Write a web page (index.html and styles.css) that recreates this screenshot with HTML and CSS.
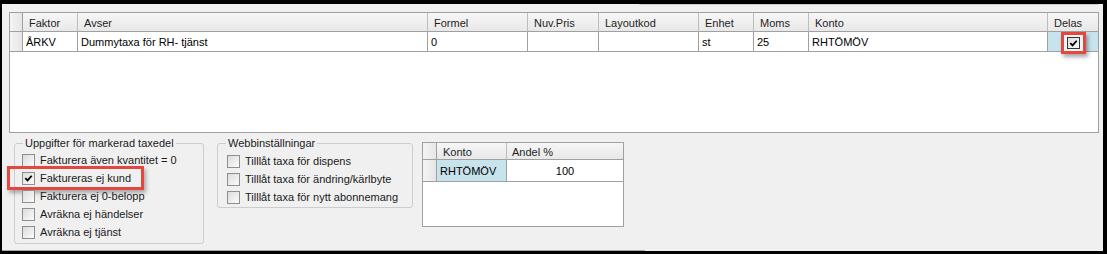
FILE: index.html
```html
<!DOCTYPE html>
<html lang="sv">
<head>
    <meta charset="UTF-8" />
    <title>Taxedel</title>
    <link rel="stylesheet" href="styles.css">
</head>
<body>
    <div class="frame">
        <div class="top-strip"><div class="stub"></div></div>

        <div class="grid main-grid">
            <div class="grid-row head">
                <div class="cell rh"></div>
                <div class="cell">Faktor</div>
                <div class="cell">Avser</div>
                <div class="cell">Formel</div>
                <div class="cell">Nuv.Pris</div>
                <div class="cell">Layoutkod</div>
                <div class="cell">Enhet</div>
                <div class="cell">Moms</div>
                <div class="cell">Konto</div>
                <div class="cell last">Delas</div>
            </div>
            <div class="grid-row data">
                <div class="cell rh"></div>
                <div class="cell">ÅRKV</div>
                <div class="cell">Dummytaxa för RH- tjänst</div>
                <div class="cell">0</div>
                <div class="cell"></div>
                <div class="cell"></div>
                <div class="cell">st</div>
                <div class="cell">25</div>
                <div class="cell">RHTÖMÖV</div>
                <div class="cell last selected center">
                    <span class="mark">
                        <span class="cb cb-dark"><svg viewBox="0 0 12 12" width="12" height="12"><polyline points="2.5,5.5 5,8 9.5,3" fill="none" stroke="#000" stroke-width="2"/></svg></span>
                    </span>
                </div>
            </div>
        </div>

        <div class="details">
            <fieldset class="group group-task">
                <legend>Uppgifter för markerad taxedel</legend>
                <label class="opt"><span class="cb"></span>Fakturera även kvantitet = 0</label>
                <label class="opt highlighted"><span class="cb"><svg viewBox="0 0 12 12" width="12" height="12"><polyline points="2.5,5.5 5,8 9.5,3" fill="none" stroke="#000" stroke-width="2"/></svg></span>Faktureras ej kund</label>
                <label class="opt"><span class="cb"></span>Fakturera ej 0-belopp</label>
                <label class="opt"><span class="cb"></span>Avräkna ej händelser</label>
                <label class="opt"><span class="cb"></span>Avräkna ej tjänst</label>
            </fieldset>

            <fieldset class="group group-web">
                <legend>Webbinställningar</legend>
                <label class="opt"><span class="cb"></span>Tilllåt taxa för dispens</label>
                <label class="opt"><span class="cb"></span>Tilllåt taxa för ändring/kärlbyte</label>
                <label class="opt"><span class="cb"></span>Tilllåt taxa för nytt abonnemang</label>
            </fieldset>

            <div class="grid split-grid">
                <div class="grid-row head">
                    <div class="cell rh"></div>
                    <div class="cell">Konto</div>
                    <div class="cell last">Andel %</div>
                </div>
                <div class="grid-row data">
                    <div class="cell rh"></div>
                    <div class="cell selected">RHTÖMÖV</div>
                    <div class="cell last center">100</div>
                </div>
            </div>
        </div>

        <div class="bottom-line"></div>
    </div>
</body>
</html>
```

FILE: styles.css
```css
body {
    margin: 0;
    font-family: 'Liberation Sans', Arial, sans-serif;
    font-size: 11px;
    color: #111;
}

.frame {
    width: 1107px;
    height: 254px;
    box-sizing: border-box;
    border-style: solid;
    border-color: #000;
    border-width: 4px 4px 3px 2px;
    background: #f0f0f0;
    display: flex;
    flex-direction: column;
}

.top-strip {
    height: 8px;
}

.stub {
    margin-left: 637px;
    width: 459px;
    border-bottom: 1px solid #cdcdcd;
}

/* data grids */
.grid {
    background: white;
    border: 1px solid #a0a0a0;
    box-sizing: border-box;
}

.main-grid {
    margin-left: 7px;
    width: 1090px;
    height: 121px;
}

.grid-row {
    display: grid;
}

.main-grid .grid-row {
    grid-template-columns: 13px 55px 350px 100px 71px 100px 55px 55px 239px 50px;
}

.cell {
    box-sizing: border-box;
    border-right: 1px solid #a0a0a0;
    border-bottom: 1px solid #a0a0a0;
    white-space: nowrap;
    overflow: visible;
    display: flex;
    align-items: center;
}

.cell.last {
    border-right: none;
}

.head .cell {
    height: 19px;
    padding-left: 6px;
    padding-top: 1px;
    background: linear-gradient(#f6f6f6, #e8e8e8);
    border-right-color: #bdbdbd;
    border-bottom-color: #a0a0a0;
    color: #1e1e1e;
}

.data .cell {
    height: 20px;
    padding-left: 3px;
    color: #000;
}

.cell.rh {
    padding-left: 0;
    background: linear-gradient(90deg, #f4f4f4, #e6e6e6);
    border-right-color: #a0a0a0;
}

.cell.selected {
    background: #c7e3eb;
}

.cell.center {
    justify-content: center;
    padding-left: 0;
}

.main-grid .data .cell.center {
    align-items: flex-start;
}

/* red callout around a control */
.mark {
    display: inline-flex;
    align-items: center;
    justify-content: center;
    width: 25px;
    height: 22px;
    box-sizing: border-box;
    border: 3px solid #e5463d;
    box-shadow: 2px 3px 4px rgba(0, 0, 0, 0.35);
    background: #f4f4f4;
}

/* checkboxes */
.cb {
    width: 13px;
    height: 13px;
    box-sizing: border-box;
    border: 1px solid #8e8f8f;
    background: linear-gradient(135deg, #dcdcdc, #fbfbfb);
    display: inline-flex;
    align-items: center;
    justify-content: center;
    flex: none;
}

.cb svg {
    width: 11px;
    height: 11px;
}

.cb-dark {
    border-color: #333;
    width: 13px;
    height: 12px;
}

/* lower part */
.details {
    display: flex;
    align-items: flex-start;
    padding-left: 12px;
    margin-top: 4px;
}

.group {
    margin: 0;
    border: 1px solid #c9ced2;
    border-radius: 3px;
    padding: 1px 0 0 0;
    box-sizing: border-box;
    color: #1a1a1a;
}

.group legend {
    padding: 0 2px;
    margin-left: 8px;
    line-height: 13px;
}

.group-task {
    width: 190px;
    height: 107px;
}

.group-web {
    width: 196px;
    height: 71px;
    margin-left: 13px;
    padding-top: 2px;
}

.opt {
    display: flex;
    align-items: center;
    gap: 5px;
    height: 18px;
    white-space: nowrap;
    position: relative;
}

.group-task .opt {
    padding-left: 7px;
}

.group-web .opt {
    padding-left: 9px;
}

.opt.highlighted::after {
    content: "";
    position: absolute;
    left: -8px;
    top: -3px;
    width: 137px;
    height: 24px;
    box-sizing: border-box;
    border: 3px solid #e5463d;
    box-shadow: 2px 3px 4px rgba(0, 0, 0, 0.3);
}

.split-grid {
    margin-left: 9px;
    margin-top: 5px;
    width: 202px;
    height: 85px;
}

.split-grid .grid-row {
    grid-template-columns: 14px 70px 116px;
}

.split-grid .head .cell {
    height: 17px;
}

.split-grid .data .cell {
    height: 22px;
}

.split-grid .head .cell.last {
    padding-left: 5px;
}

.bottom-line {
    margin-top: auto;
    width: 643px;
    height: 1px;
    background: #a8a8a8;
}
```
